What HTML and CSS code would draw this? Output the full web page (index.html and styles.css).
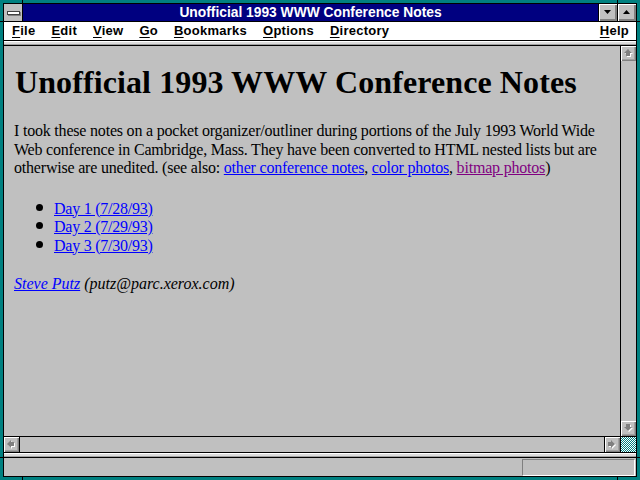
FILE: index.html
```html
<!DOCTYPE html>
<html>
<head>
<meta charset="utf-8">
<title>Unofficial 1993 WWW Conference Notes</title>
<link rel="stylesheet" href="styles.css">
</head>
<body>
<div class="window">
  <div class="frame">
    <div class="titlebar">
      <div class="sysmenu"><span class="sysbar"></span></div>
      <div class="title">Unofficial 1993 WWW Conference Notes</div>
      <div class="tbtn"><svg width="7" height="4" viewBox="0 0 7 4"><polygon points="0,0 7,0 3.5,4" fill="#000"/></svg></div>
      <div class="tbtn"><svg width="7" height="4" viewBox="0 0 7 4"><polygon points="0,4 7,4 3.5,0" fill="#000"/></svg></div>
    </div>
    <div class="menubar">
      <span class="menu"><u>F</u>ile</span>
      <span class="menu"><u>E</u>dit</span>
      <span class="menu"><u>V</u>iew</span>
      <span class="menu"><u>G</u>o</span>
      <span class="menu"><u>B</u>ookmarks</span>
      <span class="menu"><u>O</u>ptions</span>
      <span class="menu"><u>D</u>irectory</span>
      <span class="spacer"></span>
      <span class="menu"><u>H</u>elp</span>
    </div>
    <div class="sep"></div>
    <div class="main">
      <div class="doc">
        <h1>Unofficial 1993 WWW Conference Notes</h1>
        <p>I took these notes on a pocket organizer/outliner during portions of the July 1993 World Wide Web conference in Cambridge, Mass. They have been converted to HTML nested lists but are otherwise are unedited. (see also: <a href="#">other conference notes</a>, <a href="#">color photos</a>, <a class="visited" href="#">bitmap photos</a>)</p>
        <ul>
          <li><a href="#">Day 1 (7/28/93)</a></li>
          <li><a href="#">Day 2 (7/29/93)</a></li>
          <li><a href="#">Day 3 (7/30/93)</a></li>
        </ul>
        <address><a href="#">Steve Putz</a> (putz@parc.xerox.com)</address>
      </div>
      <div class="vscroll">
        <div class="sbtn"><svg width="9" height="9" viewBox="0 0 9 9"><polygon points="5,1 9,5 7,5 7,8 3,8 3,5 1,5" fill="#fff"/><polygon points="4,0 8,4 6,4 6,7 2,7 2,4 0,4" fill="#808080"/></svg></div>
        <div class="track"></div>
        <div class="sbtn"><svg width="9" height="9" viewBox="0 0 9 9"><polygon points="5,8 9,4 7,4 7,1 3,1 3,4 1,4" fill="#fff"/><polygon points="4,7 8,3 6,3 6,0 2,0 2,3 0,3" fill="#808080"/></svg></div>
      </div>
    </div>
    <div class="hbar">
      <div class="hscroll">
        <div class="sbtn left"><svg width="9" height="9" viewBox="0 0 9 9"><polygon points="1,5 5,1 5,3 8,3 8,7 5,7 5,9" fill="#fff"/><polygon points="0,4 4,0 4,2 7,2 7,6 4,6 4,8" fill="#808080"/></svg></div>
        <div class="track"></div>
        <div class="sbtn right"><svg width="9" height="9" viewBox="0 0 9 9"><polygon points="8,5 4,1 4,3 1,3 1,7 4,7 4,9" fill="#fff"/><polygon points="7,4 3,0 3,2 0,2 0,6 3,6 3,8" fill="#808080"/></svg></div>
      </div>
      <div class="corner"></div>
    </div>
    <div class="sep"></div>
    <div class="status"><div class="progress"></div></div>
  </div>
  <span class="tick t1"></span>
  <span class="tick t2"></span>
  <span class="tick t3"></span>
  <span class="tick t4"></span>
  <span class="tick t5"></span>
  <span class="tick t6"></span>
  <span class="tick t7"></span>
  <span class="tick t8"></span>
</div>
</body>
</html>
```
FILE: styles.css
```css
html, body {
  margin: 0;
  padding: 0;
  background: #008080;
}

.window {
  position: relative;
  width: 640px;
  height: 480px;
  padding: 3px;
  box-sizing: border-box;
  background: #008080;
}

.frame {
  height: 100%;
  box-sizing: border-box;
  border: 1px solid #000;
  background: #c0c0c0;
  display: flex;
  flex-direction: column;
}

/* title bar */
.titlebar {
  height: 17px;
  border-bottom: 1px solid #000;
  display: flex;
  flex: none;
}

.sysmenu {
  width: 18px;
  border-right: 1px solid #000;
  background: #c0c0c0;
  display: flex;
  align-items: center;
  justify-content: center;
}

.sysbar {
  display: block;
  width: 11px;
  height: 2px;
  background: #fff;
  border: 1px solid #404040;
  box-shadow: 1px 1px 0 #808080;
  margin-top: 1px;
}

.title {
  flex: 1;
  background: #000080;
  color: #fff;
  font: bold 13.8px/17px "Liberation Sans", Arial, sans-serif;
  text-align: center;
  white-space: nowrap;
}

.tbtn {
  width: 18px;
  border-left: 1px solid #000;
  background: #c0c0c0;
  box-shadow: inset 1px 1px 0 #fff, inset -1px -1px 0 #808080, inset -2px -2px 0 #808080;
  display: flex;
  align-items: center;
  justify-content: center;
}

.tbtn svg {
  display: block;
  margin: -1px 1px 0 0;
}

/* menu bar */
.menubar {
  height: 18px;
  flex: none;
  background: #fff;
  border-bottom: 1px solid #000;
  display: flex;
  font: bold 13px/18px "Liberation Sans", Arial, sans-serif;
  color: #000;
}

.menu {
  padding: 0 8px;
  letter-spacing: 0.25px;
  white-space: nowrap;
}

.menu:last-child {
  padding-right: 7px;
}

.menu u {
  text-underline-offset: 2px;
}

.spacer {
  flex: 1;
}

/* separators */
.sep {
  height: 4px;
  flex: none;
  border-bottom: 1px solid #000;
  background: linear-gradient(#fff 0 1px, #dcdcdc 1px 3px, #a0a0a0 3px);
}

/* main document area */
.main {
  flex: 1;
  display: flex;
  min-height: 0;
}

.doc {
  flex: 1;
  overflow: hidden;
  padding: 0 10px;
  font: 16px/18.5px "Liberation Serif", "Times New Roman", serif;
  color: #000;
}

.doc h1 {
  font-size: 32px;
  line-height: 36px;
  font-weight: bold;
  margin: 18px 0 22px 1px;
  letter-spacing: 0.1px;
}

.doc p {
  margin: 0 0 22px;
  letter-spacing: -0.2px;
}

.doc a {
  color: #0000ff;
  text-decoration: underline;
}

.doc a.visited {
  color: #800080;
}

.doc ul {
  list-style: none;
  margin: 0 0 20px;
  padding: 0 0 0 22px;
  letter-spacing: -0.25px;
}

.doc li {
  display: flex;
  align-items: center;
}

.doc li::before {
  content: "";
  width: 7px;
  height: 7px;
  border-radius: 50%;
  background: #000;
  margin: 0 11px 3px 0;
  flex: none;
}

.doc address {
  font-style: italic;
}

/* scrollbars */
.vscroll {
  width: 15px;
  flex: none;
  border-left: 1px solid #000;
  display: flex;
  flex-direction: column;
}

.track {
  flex: 1;
  background: #c0c0c0;
}

.sbtn {
  width: 15px;
  height: 15px;
  flex: none;
  box-sizing: border-box;
  background: #c0c0c0;
  box-shadow: inset 1px 1px 0 #fff, inset -1px -1px 0 #808080, inset -2px -2px 0 #a0a0a0;
  display: flex;
  align-items: center;
  justify-content: center;
}

.sbtn svg {
  display: block;
}

.hbar {
  height: 15px;
  flex: none;
  border-top: 1px solid #000;
  border-bottom: 1px solid #000;
  display: flex;
}

.hscroll {
  flex: 1;
  display: flex;
}

.sbtn.left {
  border-right: 1px solid #000;
  width: 16px;
}

.sbtn.right {
  border-left: 1px solid #000;
  width: 16px;
}

.corner {
  width: 15px;
  border-left: 1px solid #000;
  background-color: #fff;
  background-image: conic-gradient(#008080 25%, #fff 0 50%, #008080 0 75%, #fff 0);
  background-size: 2px 2px;
}

/* status bar */
.status {
  height: 18px;
  flex: none;
  display: flex;
  justify-content: flex-end;
  align-items: flex-start;
}

.progress {
  width: 111px;
  height: 15px;
  margin: 1px 1px 0 0;
  border-top: 1px solid #808080;
  border-left: 1px solid #808080;
  border-bottom: 1px solid #fff;
  border-right: 1px solid #fff;
}

/* frame corner ticks */
.tick {
  position: absolute;
  background: #000;
}

.t1 { left: 22px; top: 0; width: 1px; height: 3px; }
.t2 { left: 617px; top: 0; width: 1px; height: 3px; }
.t3 { left: 22px; bottom: 0; width: 1px; height: 3px; }
.t4 { left: 617px; bottom: 0; width: 1px; height: 3px; }
.t5 { left: 0; top: 21px; width: 3px; height: 1px; }
.t6 { right: 0; top: 21px; width: 3px; height: 1px; }
.t7 { left: 0; top: 457px; width: 3px; height: 1px; }
.t8 { right: 0; top: 457px; width: 3px; height: 1px; }
```
